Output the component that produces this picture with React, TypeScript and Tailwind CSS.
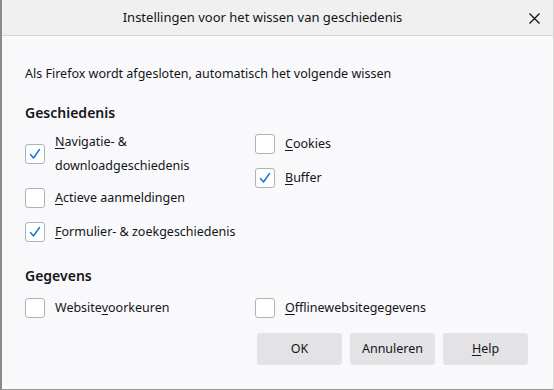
import React from 'react';

const Check = () => (
  <svg width="14" height="14" viewBox="0 0 14 14" fill="none">
    <path d="M2.5 7.5 L5.5 11 L11.5 2.5" stroke="#0b72e0" strokeWidth="1.4" strokeLinecap="round" strokeLinejoin="round" />
  </svg>
);

type Props = { checked?: boolean; children: React.ReactNode; tall?: boolean };

const Option: React.FC<Props> = ({ checked, children, tall }) => (
  <label className={`flex items-center ${tall ? 'h-[48px]' : 'h-[28px]'}`}>
    <span className="w-[20px] h-[20px] shrink-0 rounded-[3px] border border-[#b1b1b8] bg-white flex items-center justify-center">
      {checked && <Check />}
    </span>
    <span className="ml-[10px] leading-[24px]">{children}</span>
  </label>
);

const K: React.FC<{ children: React.ReactNode }> = ({ children }) => (
  <span className="underline underline-offset-2">{children}</span>
);

export default function App() {
  return (
    <div
      className="w-[554px] h-[390px] bg-[#f9f9fb] text-[#15141a] text-[12.5px] border-l-2 border-l-[#8a8a8a] border-b border-b-[#9a9a9a] border-r border-r-[#d8d8d8] flex flex-col"
      style={{ fontFamily: '"Noto Sans", "Open Sans", sans-serif' }}
    >
      <div className="h-[36px] shrink-0 bg-[#f0f0f0] border-b border-[#d4d4d8] flex items-center relative">
        <div className="w-full text-center text-[13px] pr-[30px]">Instellingen voor het wissen van geschiedenis</div>
        <svg className="absolute right-[13px] top-[13px]" width="11" height="11" viewBox="0 0 11 11">
          <path d="M0.5 0.5 L10.5 10.5 M10.5 0.5 L0.5 10.5" stroke="#111" strokeWidth="1.3" />
        </svg>
      </div>

      <div className="pl-[23px] pr-[25px] flex flex-col">
        <p className="mt-[28px] leading-[20px]">Als Firefox wordt afgesloten, automatisch het volgende wissen</p>

        <h2 className="mt-[18px] leading-[22px] text-[14px] font-semibold">Geschiedenis</h2>
        <div className="mt-[6px] grid grid-cols-[230px_1fr]">
          <div className="flex flex-col gap-[6px]">
            <Option checked tall>
              <K>N</K>avigatie- &amp;
              <br />
              downloadgeschiedenis
            </Option>
            <Option>
              <K>A</K>ctieve aanmeldingen
            </Option>
            <Option checked>
              <K>F</K>ormulier- &amp; zoekgeschiedenis
            </Option>
          </div>
          <div className="flex flex-col gap-[6px]">
            <Option>
              <K>C</K>ookies
            </Option>
            <Option checked>
              <K>B</K>uffer
            </Option>
          </div>
        </div>

        <h2 className="mt-[19px] leading-[22px] text-[14px] font-semibold">Gegevens</h2>
        <div className="mt-[7px] grid grid-cols-[230px_1fr]">
          <Option>
            Website<K>v</K>oorkeuren
          </Option>
          <Option>
            <K>O</K>fflinewebsitegegevens
          </Option>
        </div>

        <div className="mt-[11px] flex justify-end gap-[8px]">
          <button className="w-[85px] h-[32px] bg-[#e3e3e5] rounded-[3px]">OK</button>
          <button className="w-[85px] h-[32px] bg-[#e3e3e5] rounded-[3px]">Annuleren</button>
          <button className="w-[85px] h-[32px] bg-[#e3e3e5] rounded-[3px]">
            <K>H</K>elp
          </button>
        </div>
      </div>
    </div>
  );
}
